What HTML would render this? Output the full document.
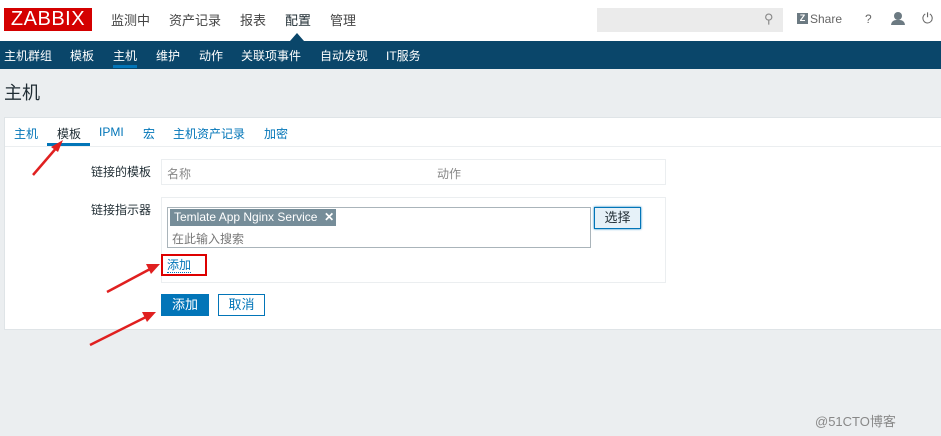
<!DOCTYPE html><html><head><meta charset="utf-8"><style>
body{margin:0;width:941px;height:436px;background:#ebeef0;font-family:"Liberation Sans","Noto Sans CJK SC",sans-serif;font-size:12px;position:relative;overflow:hidden;color:#1f2c33}
.a{position:absolute;white-space:nowrap}
.h{top:10px;font-size:13px;color:#444}
.n{top:47px;color:#fff}
.t{top:125px;color:#0275b8}
</style></head><body>
<div class="a" style="left:0;top:0;width:941px;height:41px;background:#fff"></div>
<div class="a" style="left:4px;top:8px;width:88px;height:23px;background:#d40000;color:#fff;font-size:20px;line-height:23px;text-align:center;letter-spacing:0.5px">ZABBIX</div>
<div class="a h" style="left:111px">监测中</div>
<div class="a h" style="left:169px">资产记录</div>
<div class="a h" style="left:240px">报表</div>
<div class="a h" style="left:285px;color:#1f2c33">配置</div>
<div class="a h" style="left:330px">管理</div>
<div class="a" style="left:290px;top:33px;width:0;height:0;border-left:7px solid transparent;border-right:7px solid transparent;border-bottom:8px solid #0a466a"></div>
<div class="a" style="left:597px;top:8px;width:186px;height:24px;background:#ebebeb"></div>
<div class="a" style="left:764px;top:11px;color:#888;font-size:13px">⚲</div>
<div class="a" style="left:797px;top:13px;width:11px;height:11px;background:#6c7a82;color:#fff;font-size:9px;line-height:11px;text-align:center;font-weight:bold">Z</div>
<div class="a" style="left:810px;top:12px;color:#666">Share</div>
<div class="a" style="left:865px;top:12px;color:#666">?</div>
<div class="a" style="left:894px;top:12px;width:8px;height:8px;border-radius:50%;background:#6c7a82"></div>
<div class="a" style="left:891px;top:20px;width:14px;height:5px;border-radius:5px 5px 0 0;background:#6c7a82"></div>
<div class="a" style="left:922px;top:10px;color:#666;font-size:14px">⏻</div>
<div class="a" style="left:0;top:41px;width:941px;height:28px;background:#0a466a"></div>
<div class="a n" style="left:4px">主机群组</div>
<div class="a n" style="left:70px">模板</div>
<div class="a n" style="left:113px">主机</div>
<div class="a n" style="left:156px">维护</div>
<div class="a n" style="left:199px">动作</div>
<div class="a n" style="left:241px">关联项事件</div>
<div class="a n" style="left:320px">自动发现</div>
<div class="a n" style="left:386px">IT服务</div>
<div class="a" style="left:113px;top:65px;width:24px;height:3px;background:#0275b8"></div>
<div class="a" style="left:4px;top:79px;font-size:18px;color:#1f2c33">主机</div>
<div class="a" style="left:4px;top:117px;width:937px;height:213px;background:#fff;border:1px solid #dfe4e7;border-right:none;box-sizing:border-box"></div>
<div class="a" style="left:5px;top:146px;width:936px;height:1px;background:#ebeef0"></div>
<div class="a t" style="left:14px">主机</div>
<div class="a t" style="left:57px;color:#1f2c33">模板</div>
<div class="a t" style="left:99px">IPMI</div>
<div class="a t" style="left:143px">宏</div>
<div class="a t" style="left:173px">主机资产记录</div>
<div class="a t" style="left:264px">加密</div>
<div class="a" style="left:47px;top:143px;width:43px;height:3px;background:#0275b8"></div>
<div class="a" style="left:91px;top:163px">链接的模板</div>
<div class="a" style="left:161px;top:159px;width:505px;height:26px;border:1px solid #ebeef0;box-sizing:border-box"></div>
<div class="a" style="left:167px;top:165px;color:#888">名称</div>
<div class="a" style="left:437px;top:165px;color:#888">动作</div>
<div class="a" style="left:91px;top:201px">链接指示器</div>
<div class="a" style="left:161px;top:197px;width:505px;height:86px;border:1px solid #ebeef0;box-sizing:border-box"></div>
<div class="a" style="left:167px;top:207px;width:424px;height:41px;border:1px solid #aab4ba;box-sizing:border-box"></div>
<div class="a" style="left:170px;top:209px;width:166px;height:17px;background:#768d99;color:#fff;line-height:17px;padding-left:4px;box-sizing:border-box">Temlate App Nginx Service &nbsp;<b>✕</b></div>
<div class="a" style="left:172px;top:230px;color:#777">在此输入搜索</div>
<div class="a" style="left:594px;top:207px;width:47px;height:22px;border:1px solid #0275b8;background:#e6f1f8;box-sizing:border-box;text-align:center;line-height:20px;font-size:13px;box-shadow:0 0 2px #0275b8">选择</div>
<div class="a" style="left:161px;top:254px;width:46px;height:22px;border:2px solid #d00;box-sizing:border-box"></div>
<div class="a" style="left:167px;top:258px;color:#0275b8;border-bottom:1px dotted #0275b8;line-height:14px">添加</div>
<div class="a" style="left:161px;top:294px;width:48px;height:22px;background:#0275b8;color:#fff;text-align:center;line-height:22px;font-size:13px">添加</div>
<div class="a" style="left:218px;top:294px;width:47px;height:22px;border:1px solid #0275b8;box-sizing:border-box;color:#0275b8;text-align:center;line-height:20px;font-size:13px">取消</div>
<svg class="a" style="left:0;top:0" width="941" height="436">
<g stroke="#e02020" stroke-width="2.5" fill="#e02020">
<line x1="33" y1="175" x2="58" y2="146"/><polygon points="63,140 51,147 58,152" stroke="none"/>
<line x1="107" y1="292" x2="152" y2="268"/><polygon points="160,264 146,264 151,274" stroke="none"/>
<line x1="90" y1="345" x2="148" y2="316"/><polygon points="156,312 142,312 147,322" stroke="none"/>
</g></svg>
<div class="a" style="left:815px;top:411px;color:#888;font-size:13px">@51CTO博客</div>
</body></html>
